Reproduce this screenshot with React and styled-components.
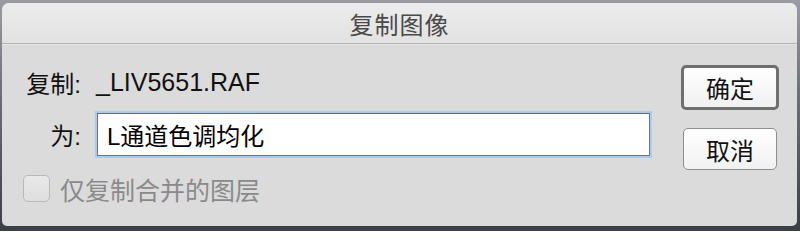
import styled, { createGlobalStyle } from "styled-components";

const GlobalStyle = createGlobalStyle`
    html, body {
        margin: 0;
        padding: 0;
    }
    body {
        font-family: "Liberation Sans", "Noto Sans CJK SC", sans-serif;
    }
`;

const Backdrop = styled.div`
    width: 800px;
    height: 231px;
    box-sizing: border-box;
    padding: 3px 3px 5px 2px;
    background: linear-gradient(180deg, #9a9ca2 0%, #6d717a 40%, #3a3e46 100%);
    overflow: hidden;
`;

const Window = styled.div`
    height: 100%;
    display: flex;
    flex-direction: column;
    background: #dbdbdb;
    border-radius: 7px 7px 5px 5px;
    overflow: hidden;
`;

const TitleBar = styled.div`
    height: 40px;
    flex-shrink: 0;
    display: flex;
    align-items: center;
    justify-content: center;
    background: linear-gradient(180deg, #ececec 0%, #e2e2e2 100%);
    border-bottom: 1px solid #b3b3b3;
    box-shadow: 0 1px 0 #e6e6e6;
    color: #4a4a4a;
    font-size: 24px;
    letter-spacing: 1px;
`;

const Content = styled.div`
    flex: 1;
    display: flex;
    justify-content: space-between;
    padding: 0 18px 0 20px;
`;

const Form = styled.div`
    display: flex;
    flex-direction: column;
    padding-top: 21px;
`;

const Row = styled.div`
    display: flex;
    align-items: center;
    height: ${({ h }) => h}px;
    margin-top: ${({ mt }) => mt || 0}px;
`;

const Label = styled.div`
    width: 59px;
    text-align: right;
    font-size: 24px;
    color: #111;
    margin-right: 15px;
    white-space: nowrap;
`;

const Value = styled.div`
    font-size: 25px;
    color: #111;
`;

const TextInput = styled.input`
    box-sizing: border-box;
    width: 553px;
    height: 43px;
    margin-left: 1px;
    padding: 0 9px;
    border: 1px solid #747474;
    border-top-color: #6a6a6a;
    box-shadow: 0 0 0 2px #a9cbef;
    background: #fff;
    font-family: inherit;
    font-size: 24px;
    color: #000;
    outline: none;
`;

const CheckLabel = styled.label`
    display: flex;
    align-items: center;
    gap: 10px;
    font-size: 25px;
    color: #8a8a8a;
    margin-left: 1px;
`;

const Box = styled.span`
    box-sizing: border-box;
    width: 27px;
    height: 27px;
    border: 1px solid #b9b9b9;
    border-radius: 5px;
    background: linear-gradient(180deg, #e9e9e9 0%, #dedede 100%);
`;

const Buttons = styled.div`
    display: flex;
    flex-direction: column;
    align-items: center;
    padding-top: 21px;
    gap: 18px;
`;

const Button = styled.button`
    box-sizing: border-box;
    width: ${({ primary }) => (primary ? 98 : 94)}px;
    height: ${({ primary }) => (primary ? 45 : 42)}px;
    border: ${({ primary }) => (primary ? "3px solid #6f6f6f" : "1px solid #8f8f8f")};
    border-radius: 5px;
    background: linear-gradient(180deg, #ffffff 0%, #f1f1f1 100%);
    font-family: inherit;
    font-size: 24px;
    color: #111;
    padding: 0;
    display: flex;
    align-items: center;
    justify-content: center;
`;

export default function App() {
    return (
        <>
            <GlobalStyle />
            <Backdrop>
                <Window>
                    <TitleBar>复制图像</TitleBar>
                    <Content>
                        <Form>
                            <Row h={34}>
                                <Label>复制:</Label>
                                <Value>_LIV5651.RAF</Value>
                            </Row>
                            <Row h={43} mt={14}>
                                <Label>为:</Label>
                                <TextInput defaultValue="L通道色调均化" />
                            </Row>
                            <Row h={27} mt={19}>
                                <CheckLabel>
                                    <Box />
                                    仅复制合并的图层
                                </CheckLabel>
                            </Row>
                        </Form>
                        <Buttons>
                            <Button primary>确定</Button>
                            <Button>取消</Button>
                        </Buttons>
                    </Content>
                </Window>
            </Backdrop>
        </>
    );
}
